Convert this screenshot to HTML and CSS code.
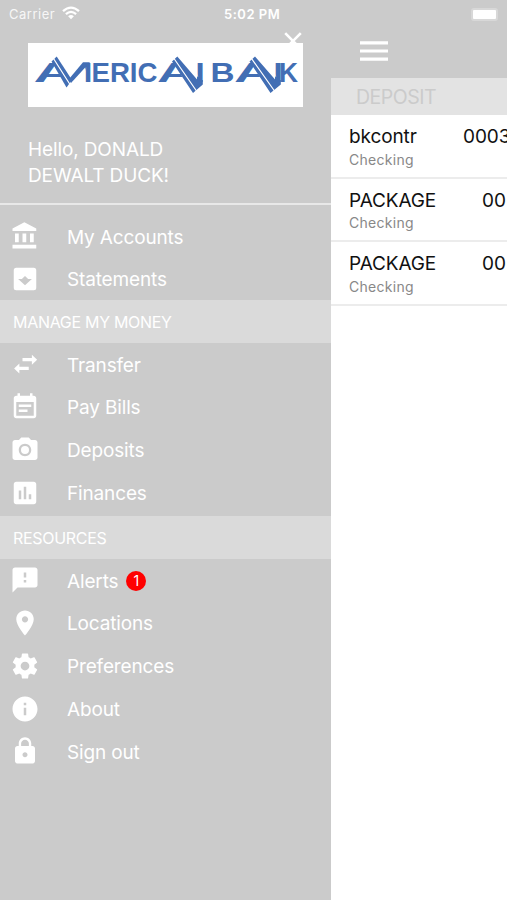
FILE: index.html
```html
<!DOCTYPE html>
<html lang="en">
<head>
<meta charset="utf-8">
<title>American Bank</title>
<link rel="stylesheet" href="styles.css">
</head>
<body>
<div class="phone">
  <header class="status">
    <span class="carrier">Carrier</span>
    <svg class="wifi" viewBox="0 0 18 14"><path d="M1 5.200Q9-2 17 5.200M3.900 8.100Q9 3.700 14.100 8.100" fill="none" stroke="#fff" stroke-width="2.300"/><path d="M6.100 10.200Q9 7.600 11.900 10.200L9 13.200z" fill="#fff"/></svg>
    <span class="time">5:02 PM</span>
    <span class="battery"></span>
  </header>
  <div class="panes">
    <nav class="drawer">
      <div class="brand">
        <svg class="close" viewBox="0 0 18 18"><path d="M1.200 1.200 16.800 16.800M16.800 1.200 1.200 16.800" stroke="#fff" stroke-width="2.600"/></svg>
        <svg class="logo" viewBox="28 43 275 64" role="img" aria-label="American Bank">
          <defs>
            <clipPath id="a1"><path d="M30 50H47L68 90H30z"/></clipPath>
            <clipPath id="m1"><path d="M85 50H92V90H85z"/></clipPath>
            <clipPath id="a2"><path d="M150 50H167L190 90H150z"/></clipPath>
            <clipPath id="n1"><path d="M197 50H206V90H197z"/></clipPath>
            <clipPath id="a3"><path d="M230 50H244L268 90H230z"/></clipPath>
            <clipPath id="n2"><path d="M275 50H285V90H275z"/></clipPath>
          </defs>
          <path d="M28 43H303V107H28z" fill="#fff"/>
          <g class="wordmark">
            <text x="33.500" y="82.300" textLength="42" lengthAdjust="spacingAndGlyphs" clip-path="url(#a1)">A</text>
            <text x="64" y="82.300" textLength="28.500" lengthAdjust="spacingAndGlyphs" clip-path="url(#m1)">M</text>
            <text x="91.500" y="82.300" textLength="66" lengthAdjust="spacingAndGlyphs">ERIC</text>
            <text x="157" y="82.300" textLength="38" lengthAdjust="spacingAndGlyphs" clip-path="url(#a2)">A</text>
            <text x="178" y="82.300" textLength="27" lengthAdjust="spacingAndGlyphs" clip-path="url(#n1)">N</text>
            <text x="210.500" y="82.300" textLength="24" lengthAdjust="spacingAndGlyphs">B</text>
            <text x="234" y="82.300" textLength="40" lengthAdjust="spacingAndGlyphs" clip-path="url(#a3)">A</text>
            <text x="256" y="82.300" textLength="27" lengthAdjust="spacingAndGlyphs" clip-path="url(#n2)">N</text>
            <text x="279" y="82.300" textLength="19" lengthAdjust="spacingAndGlyphs">K</text>
          </g>
          <g class="bands">
            <path d="M51.500 61.500 56.700 56.500 72 80 66.500 87.500z"/>
            <path d="M69 79 83 62.300H90L71 83z"/>
            <path d="M172 61.500 177.300 56.500 197.500 80H202.800V84.500L193 93z"/>
            <path d="M249.500 61.500 255 56.500 275.500 80H280.800V84.500L270.500 93z"/>
          </g>
          <path class="split" d="M53.500 58.500 70 84.500M174 58.500 196.500 91M251.500 58.500 274.500 91"/>
        </svg>
      </div>
      <p class="hello">Hello, DONALD<br>DEWALT DUCK!</p>
      <ul class="menu first">
        <li><svg viewBox="0 0 24 24"><path d="M4 10v7h3v-7H4zm6 0v7h3v-7h-3zM2 22h19v-3H2v3zm14-12v7h3v-7h-3zM11.500 1 2 6v2h19V6l-9.500-5z"/></svg>My Accounts</li>
        <li><svg viewBox="0 0 24 24"><path fill-rule="evenodd" d="M5 3h14q2 0 2 2v14q0 2-2 2H5q-2 0-2-2V5q0-2 2-2zM12 17l5.500-5H14.500L12 9.500 9.500 12H6.500z"/></svg>Statements</li>
      </ul>
      <h2>MANAGE MY MONEY</h2>
      <ul class="menu">
        <li><svg viewBox="0 0 24 24"><path d="M7.500 11.500 3.300 15.500l4.200 4v-2.700H15v-2.600H7.500zM21.700 8.500l-4.200-4v2.700H10v2.600h7.500v2.700z"/></svg>Transfer</li>
        <li><svg viewBox="0 0 24 24"><path d="M17 10H7v2h10v-2zm2-7h-1V1h-2v2H8V1H6v2H5c-1.110 0-1.990.9-1.990 2L3 19c0 1.100.89 2 2 2h14c1.100 0 2-.9 2-2V5c0-1.100-.9-2-2-2zm0 16H5V8h14v11zm-5-5H7v2h7v-2z"/></svg>Pay Bills</li>
        <li><svg viewBox="0 0 24 24"><circle cx="12" cy="12" r="3.200"/><path d="M9 2 7.170 4H4c-1.100 0-2 .9-2 2v12c0 1.100.9 2 2 2h16c1.100 0 2-.9 2-2V6c0-1.100-.9-2-2-2h-3.170L15 2H9zm3 15c-2.760 0-5-2.240-5-5s2.240-5 5-5 5 2.240 5 5-2.240 5-5 5z"/></svg>Deposits</li>
        <li><svg viewBox="0 0 24 24"><path d="M19 3H5c-1.100 0-2 .9-2 2v14c0 1.100.9 2 2 2h14c1.100 0 2-.9 2-2V5c0-1.100-.9-2-2-2zM9 17H7v-7h2v7zm4 0h-2V7h2v10zm4 0h-2v-4h2v4z"/></svg>Finances</li>
      </ul>
      <h2 class="resources">RESOURCES</h2>
      <ul class="menu">
        <li><svg viewBox="0 0 24 24"><path d="M20 2H4c-1.100 0-1.990.9-1.990 2L2 22l4-4h14c1.100 0 2-.9 2-2V4c0-1.100-.9-2-2-2zm-7 12h-2v-2h2v2zm0-4h-2V6h2v4z"/></svg>Alerts<span class="badge">1</span></li>
        <li><svg viewBox="0 0 24 24"><path d="M12 2C8.130 2 5 5.130 5 9c0 5.250 7 13 7 13s7-7.750 7-13c0-3.870-3.130-7-7-7zm0 9.500c-1.380 0-2.500-1.120-2.500-2.500s1.120-2.500 2.500-2.500 2.500 1.120 2.500 2.500-1.120 2.500-2.500 2.500z"/></svg>Locations</li>
        <li><svg viewBox="0 0 24 24"><path d="M19.430 12.980c.04-.32.07-.64.07-.98s-.03-.66-.07-.98l2.110-1.650c.19-.15.24-.42.12-.64l-2-3.460c-.12-.22-.39-.3-.61-.22l-2.490 1c-.52-.4-1.080-.73-1.690-.98l-.38-2.650C14.460 2.180 14.250 2 14 2h-4c-.25 0-.46.18-.49.42l-.38 2.650c-.61.25-1.170.59-1.690.98l-2.490-1c-.23-.09-.49 0-.61.22l-2 3.460c-.13.22-.07.49.12.64l2.110 1.650c-.04.32-.07.65-.07.98s.03.66.07.98l-2.110 1.650c-.19.15-.24.42-.12.64l2 3.460c.12.22.39.3.61.22l2.490-1c.52.4 1.080.73 1.690.98l.38 2.650c.03.24.24.42.49.42h4c.25 0 .46-.18.49-.42l.38-2.650c.61-.25 1.170-.59 1.690-.98l2.490 1c.23.09.49 0 .61-.22l2-3.460c.12-.22.07-.49-.12-.64l-2.110-1.650zM12 15.500c-1.930 0-3.500-1.570-3.500-3.500s1.570-3.500 3.500-3.500 3.500 1.570 3.500 3.500-1.570 3.500-3.500 3.500z"/></svg>Preferences</li>
        <li><svg viewBox="0 0 24 24"><path d="M12 2C6.480 2 2 6.480 2 12s4.480 10 10 10 10-4.480 10-10S17.520 2 12 2zm1 15h-2v-6h2v6zm0-8h-2V7h2v2z"/></svg>About</li>
        <li><svg viewBox="0 0 24 24"><path d="M18 8h-1V6c0-2.760-2.240-5-5-5S7 3.240 7 6v2H6c-1.100 0-2 .9-2 2v10c0 1.100.9 2 2 2h12c1.100 0 2-.9 2-2V10c0-1.100-.9-2-2-2zm-6 9c-1.100 0-2-.9-2-2s.9-2 2-2 2 .9 2 2-.9 2-2 2zm3.100-9H8.900V6c0-1.710 1.390-3.100 3.100-3.100s3.100 1.390 3.100 3.100v2z"/></svg>Sign out</li>
      </ul>
    </nav>
    <main class="content">
      <div class="topbar"><svg viewBox="0 0 28 20"><path d="M0 1.800h28M0 10h28M0 18.200h28" stroke="#fff" stroke-width="3.200"/></svg></div>
      <h1>DEPOSIT</h1>
      <section class="account"><div class="line"><span>bkcontr</span><span class="num wide">0003</span></div><small>Checking</small></section>
      <section class="account"><div class="line"><span>PACKAGE</span><span class="num">00</span></div><small>Checking</small></section>
      <section class="account"><div class="line"><span>PACKAGE</span><span class="num">00</span></div><small>Checking</small></section>
    </main>
  </div>
</div>
</body>
</html>
```
FILE: styles.css
```css
* { box-sizing: border-box; }
body { margin: 0; font-family: Inter, "Liberation Sans", sans-serif; background: #cbcbcb; }
.phone { width: 507px; height: 900px; overflow: hidden; display: flex; flex-direction: column; background: #cbcbcb; }
.status { height: 28px; flex: none; display: grid; grid-template-columns: 53px 18px 1fr auto; align-items: center; padding: 0 6px 0 9px; color: #fff; font-size: 13px; }
.carrier { letter-spacing: .5px; opacity: .85; }
.wifi { width: 18px; height: 14px; margin-top: -2px; }
.time { font-weight: 600; padding-left: 144px; letter-spacing: .85px; white-space: nowrap; letter-spacing: .5px; }
.battery { width: 27px; height: 13px; border-radius: 3px; background: #fff; border: 2px solid #d8d8d8; margin-right: 3px; }
.panes { flex: 1; display: flex; }
.drawer { width: 331px; flex: none; }
.brand { height: 79px; padding: 15px 0 0 28px; position: relative; }
.close { position: absolute; left: 284px; top: 4px; width: 18px; height: 18px; }
.logo { display: block; position: relative; width: 275px; height: 64px; }
.wordmark { font: bold 28px "Liberation Sans", sans-serif; fill: #426eb4; }
.bands { fill: #426eb4; }
.split { fill: none; stroke: #fff; stroke-width: 1.200; }
.hello { margin: 0; height: 98px; padding: 30px 0 0 28px; font-size: 19px; letter-spacing: -.12px; line-height: 25.500px; color: #fff; border-bottom: 2px solid #e8e8e8; }
.menu { list-style: none; margin: 0; padding: 0; color: #fff; }
.menu.first { padding-top: 10px; height: 95px; }
.menu li { display: flex; align-items: center; height: 42.750px; padding: 1.500px 0 0 10px; font-size: 19px; letter-spacing: -.15px; }
.menu svg { width: 30px; height: 30px; margin: 0 27px 1.500px 0; fill: #fff; flex: none; }
h2 { margin: 0; height: 43px; padding-left: 13px; display: flex; align-items: center; background: #dadada; color: #fff; font-weight: 400; font-size: 16px; letter-spacing: -.3px; }
.resources { margin-top: 2px; }
.badge { width: 20px; height: 20px; margin: 0 0 1px 8px; border-radius: 50%; background: #f00; font-size: 14px; display: grid; place-items: center; letter-spacing: 0; }
.content { width: 176px; overflow: hidden; background: #fff; }
.topbar { height: 50px; padding: 13px 0 0 29px; background: #cbcbcb; }
.topbar svg { display: block; width: 28px; height: 20px; }
h1 { margin: 0; height: 37px; padding-left: 25px; display: flex; align-items: center; background: #e3e3e3; color: #cbcbcb; font-size: 19.500px; font-weight: 400; letter-spacing: -.5px; }
.account { height: 63.500px; border-bottom: 2px solid #ececec; padding: 10px 0 0 18px; }
.line { display: flex; justify-content: space-between; line-height: 24.500px; font-size: 19px; color: #111; letter-spacing: -.1px; white-space: nowrap; }
.num { width: 25px; }
.num.wide { width: 44px; }
small { display: block; font-size: 14px; line-height: 20px; color: #888; letter-spacing: .3px; }
```
